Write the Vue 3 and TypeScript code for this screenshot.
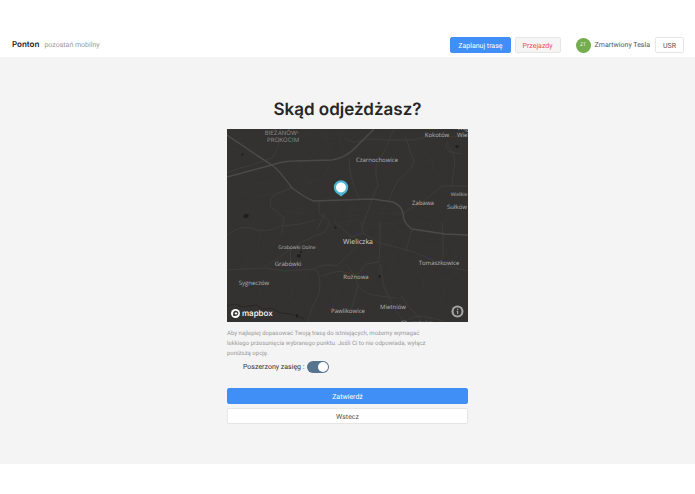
<script setup lang="ts">
import { ref } from 'vue'

interface Place {
  name: string
  x: number
  y: number
  size: number
  tone?: string
}

const extendedRange = ref(true)

const places: Place[] = [
  { name: 'BIEŻANÓW-', x: 55, y: 6, size: 6, tone: 'district' },
  { name: 'PROKOCIM', x: 56, y: 13, size: 6, tone: 'district' },
  { name: 'Kokotów', x: 210, y: 8, size: 6 },
  { name: 'Węgrzce', x: 242, y: 1, size: 6 },
  { name: 'Wielkie', x: 240, y: 8, size: 6 },
  { name: 'Czarnochowice', x: 150, y: 33, size: 6 },
  { name: 'Wielkie', x: 232, y: 67, size: 5 },
  { name: 'Zabawa', x: 196, y: 76, size: 6 },
  { name: 'Sułków', x: 230, y: 80, size: 6 },
  { name: 'Wieliczka', x: 131, y: 115, size: 7, tone: 'town' },
  { name: 'Grabówki Dolne', x: 70, y: 120, size: 5 },
  { name: 'Grabówki', x: 61, y: 137, size: 6 },
  { name: 'Tomaszkowice', x: 212, y: 136, size: 6 },
  { name: 'Rożnowa', x: 129, y: 150, size: 6 },
  { name: 'Sygneczów', x: 27, y: 156, size: 6 },
  { name: 'Mietniów', x: 166, y: 180, size: 6 },
  { name: 'Pawlikowice', x: 121, y: 184, size: 6 },
  { name: 'Chorągwica', x: 190, y: 196, size: 6 },
]

const mainRoads: string[] = [
  'M0 6 L31 27 L45 36 Q53 42 65 59 Q80 70 87 72 L145 70 L166 73 Q174 76 176 84 Q176 94 185 100 L218 105 L241 106',
  'M0 48 L45 36 Q56 32 68 32 L105 31 Q119 29 129 18 L147 0',
]

const roads: string[] = [
  'M0 44 Q12 38 22 37 L45 29 Q53 19 54 0',
  'M65 59 L49 65 Q41 70 44 78 L57 89 L55 105',
  'M92 72 V84 L103 93 L98 103 Q76 111 62 121 L43 135',
  'M98 83 L90 101',
  'M0 106 Q15 94 30 101 Q43 103 53 97 Q76 96 88 91',
  'M0 141 L38 139 L58 142 L88 140 Q95 146 92 165 Q83 180 81 193',
  'M63 117 L64 138 M88 139 Q97 134 110 137 Q119 127 130 117',
  'M94 147 L112 142 L130 146 L139 135 L152 133 L153 114',
  'M118 9 Q128 15 132 12 Q142 9 160 11 L185 11 L200 8 L241 7',
  'M167 0 L157 23 L149 37 Q148 46 151 56 L144 73 L136 96',
  'M179 8 Q182 22 187 32 Q186 40 171 51 Q165 62 162 72',
  'M241 57 H215 L194 74 L172 86',
  'M122 29 Q122 47 130 65 L133 71',
  'M222 18 Q230 27 227 40 L225 57',
  'M221 12 Q217 19 223 23 L235 25',
  'M134 93 L136 104 L153 114 L187 123 L220 137 L241 142',
  'M153 93 V114 M136 104 L124 108 L108 93',
  'M185 100 L179 122 M215 93 L216 106 L216 129 L213 136',
  'M118 135 Q129 145 131 157 Q139 166 153 167 L169 169',
  'M131 157 L124 182 M153 135 L157 158 L168 181 L178 193',
  'M174 167 Q180 178 191 187 L195 193',
  'M178 193 Q187 184 205 189 L219 193',
]

const lanes: string[] = [
  'M8 0 L18 17 L35 21 M0 19 L17 22 L31 27 M70 10 L83 5 L99 9 L105 24',
  'M94 0 L96 8 L111 11 L117 22 M111 0 L113 13 M72 32 L76 49 L89 58',
  'M22 44 L31 55 L44 53 M0 70 L14 63 L28 69 L44 65 M14 76 L29 87 L24 98',
  'M102 37 L95 50 L79 53 M107 72 L111 83 L107 94 M71 72 V96 M57 82 L78 85 L90 80',
  'M118 83 L136 79 L154 85 L174 84 M112 94 L129 91 L146 96 L176 93',
  'M118 88 L133 86 M127 75 L121 97 M158 76 L151 98 L159 111 M165 95 L174 102 L163 116',
  'M186 16 L204 28 L207 44 L220 52 M194 36 L215 24 M195 54 L183 68 L185 83',
  'M241 77 L227 82 L214 94 M202 87 L215 94 L225 91 M182 91 L205 95 M191 109 L201 119 L216 116',
  'M8 119 L20 128 L17 139 M33 102 L31 122 L39 139 M16 151 L32 158 L34 172 L49 184',
  'M57 144 L67 157 L63 170 L76 181 M79 140 L76 154 L85 164 M99 147 L111 160 L105 176 L113 190',
  'M140 142 L149 149 M167 130 L162 146 L172 157 M182 138 L197 149 L195 160 L211 174',
  'M225 111 L229 127 L224 139 L239 154 M205 147 L218 151 L230 145 M217 159 L214 172 L229 181',
]
</script>

<template>
  <div class="page">
    <header class="topbar">
      <a class="brand" href="#">Ponton</a>
      <span class="tagline">pozostań mobilny</span>
      <nav class="actions">
        <button type="button" class="btn primary">Zaplanuj trasę</button>
        <button type="button" class="btn rides">Przejazdy</button>
        <div class="user">
          <span class="avatar">ZT</span>
          <span>Zmartwiony Tesla</span>
        </div>
        <button type="button" class="btn">USR</button>
      </nav>
    </header>

    <main class="content">
      <form class="planner" @submit.prevent>
        <h1>Skąd odjeżdżasz?</h1>
        <svg class="map" viewBox="0 0 241 193" role="img" aria-label="Mapa">
          <rect width="241" height="193" fill="#333231" />
          <g class="lines">
            <path v-for="d in lanes" :key="d" :d="d" stroke="#383736" stroke-width="0.6" />
            <path v-for="d in roads" :key="d" :d="d" stroke="#403f3e" stroke-width="0.8" />
            <path v-for="d in mainRoads" :key="d" :d="d" stroke="#4b4a49" stroke-width="1.5" />
            <path
              d="M0 177 L8 175 L17 178 L29 176 L36 180 L45 179 L53 184 L65 185 L77 190"
              stroke="#282726"
              stroke-width="1"
            />
          </g>
          <g fill="#201f1f">
            <path d="M16 87 l2 -2 3 0 1 2 -2 2 -3 0z" />
            <path d="M14 26 l2 -2 1 1 -2 2z" />
            <path d="M228 17 l2 -1 2 1 -1 2 -2 0z" />
            <path d="M70 126 l2 -1 2 1 -1 3 -3 -1z" />
            <path d="M73 122 l2 0 0 2 -2 0z" />
            <path d="M107 97 l2 1 1 2 -2 0z" />
            <path d="M151 147 l2 -1 1 2 -2 1z" />
            <path d="M69 185 l2 0 0 3 -2 1z" />
          </g>
          <text
            v-for="place in places"
            :key="place.name + place.y"
            :x="place.x"
            :y="place.y"
            :font-size="place.size"
            :class="['place', place.tone]"
          >{{ place.name }}</text>

          <path
            d="M114 67.500 L108.800 63.400 A7.200 7.200 0 1 1 119.200 63.400 Z"
            fill="#4cb5d1"
          />
          <circle cx="114" cy="58.500" r="5" fill="#fff" />

          <circle cx="8.500" cy="184.500" r="4.500" fill="#fff" />
          <path
            d="M6.200 186.800 C5.700 184 6.500 182 8.300 181.700 C10.300 181.400 11.700 183 11.300 184.800 C10.800 186.800 8.700 187.300 6.200 186.800Z"
            fill="#333231"
          />
          <path d="M9 182.600 l.6 1.200 1.200 .6 -1.200 .6 -.6 1.200 -.6 -1.200 -1.200 -.6 1.200 -.6z" fill="#fff" />
          <text x="15" y="187" class="logo">mapbox</text>

          <circle cx="230.500" cy="182.500" r="6" fill="#a5a5a4" />
          <circle cx="230.500" cy="182.500" r="3.900" fill="#333231" />
          <path d="M230 179.800h1.200v1.200h-1.200z M229.600 181.800h1.600v3.200h-1.200v-2.200h-.4z" fill="#a5a5a4" />
        </svg>
        <p class="hint">
          Aby najlepiej dopasować Twoją trasę do istniejących, możemy wymagać lekkiego przesunięcia
          wybranego punktu. Jeśli Ci to nie odpowiada, wyłącz poniższą opcję.
        </p>
        <div class="option">
          <label for="range">Poszerzony zasięg :</label>
          <input id="range" v-model="extendedRange" type="checkbox" class="switch" />
        </div>
        <button type="submit" class="btn primary wide">Zatwierdź</button>
        <button type="button" class="btn wide">Wstecz</button>
      </form>
    </main>
  </div>
</template>

<style>
body {
  background: #fff;
}
</style>

<style scoped>
.page {
  padding: 32px 0 30px;
  font-family: Roboto, "Liberation Sans", sans-serif;
  font-size: 7px;
  color: #555;
  text-rendering: geometricPrecision;
}
.topbar {
  display: flex;
  align-items: center;
  height: 25px;
  padding: 0 11px 0 12px;
}
.brand {
  color: #222;
  font-family: Inter, sans-serif;
  font-size: 8px;
  font-weight: 600;
  line-height: 12px;
  margin-bottom: 2px;
  text-decoration: none;
}
.tagline {
  margin-left: 5px;
  color: #999;
}
.actions {
  display: flex;
  align-items: center;
  gap: 4px;
  margin-top: 1px;
  margin-left: auto;
}
.user {
  display: flex;
  align-items: center;
  gap: 4px;
  margin: 0 1px 0 11px;
}
.avatar {
  display: grid;
  place-items: center;
  width: 15px;
  height: 15px;
  border-radius: 50%;
  background: #74ad4d;
  color: #fff;
  font-size: 5px;
}
.btn {
  box-sizing: border-box;
  height: 16px;
  padding: 1px 7px 0;
  border: 1px solid #e6e6e6;
  border-radius: 2px;
  background: #fff;
  color: #555;
  font: inherit;
  line-height: 14px;
  text-rendering: inherit;
  cursor: pointer;
}
.btn.primary {
  border-color: #3f8ff7;
  background: #3f8ff7;
  color: #fff;
}
.btn.rides {
  background: #f5f5f5;
  color: #ef4b4f;
}
.content {
  display: flex;
  justify-content: center;
  padding: 41px 16px 40px;
  background: #f4f4f4;
}
.planner {
  display: flex;
  flex-direction: column;
  width: 100%;
  max-width: 241px;
}
h1 {
  margin: 0 0 6px;
  color: #262626;
  font-family: Inter, sans-serif;
  font-size: 17px;
  font-weight: 600;
  line-height: 25px;
  text-align: center;
  white-space: nowrap;
}
.map {
  display: block;
  width: 100%;
  overflow: hidden;
}
.lines {
  fill: none;
}
.place {
  fill: #b5b5b4;
  font-family: "Open Sans", "Noto Sans", sans-serif;
  text-anchor: middle;
}
.place.town {
  fill: #d2d2d1;
}
.place.district {
  fill: #858584;
  font-family: Inter, sans-serif;
}
.logo {
  fill: #fff;
  font-family: Inter, sans-serif;
  font-size: 8px;
  font-weight: 500;
}
.hint {
  max-width: 200px;
  margin: 7px 0 2px;
  color: #999;
  font-size: 6px;
  line-height: 10px;
}
.option {
  display: flex;
  align-items: center;
  gap: 3px;
  margin: 0 0 15px 16px;
  color: #333;
}
.switch {
  display: flex;
  align-items: center;
  box-sizing: border-box;
  width: 22px;
  height: 12px;
  margin: 0;
  padding: 1px;
  border-radius: 6px;
  appearance: none;
  background: #aaa;
  cursor: pointer;
}
.switch::before {
  content: "";
  width: 10px;
  height: 10px;
  border-radius: 50%;
  background: #fff;
}
.switch:checked {
  justify-content: flex-end;
  background: #57748f;
}
.wide + .wide {
  margin-top: 4px;
}
</style>
